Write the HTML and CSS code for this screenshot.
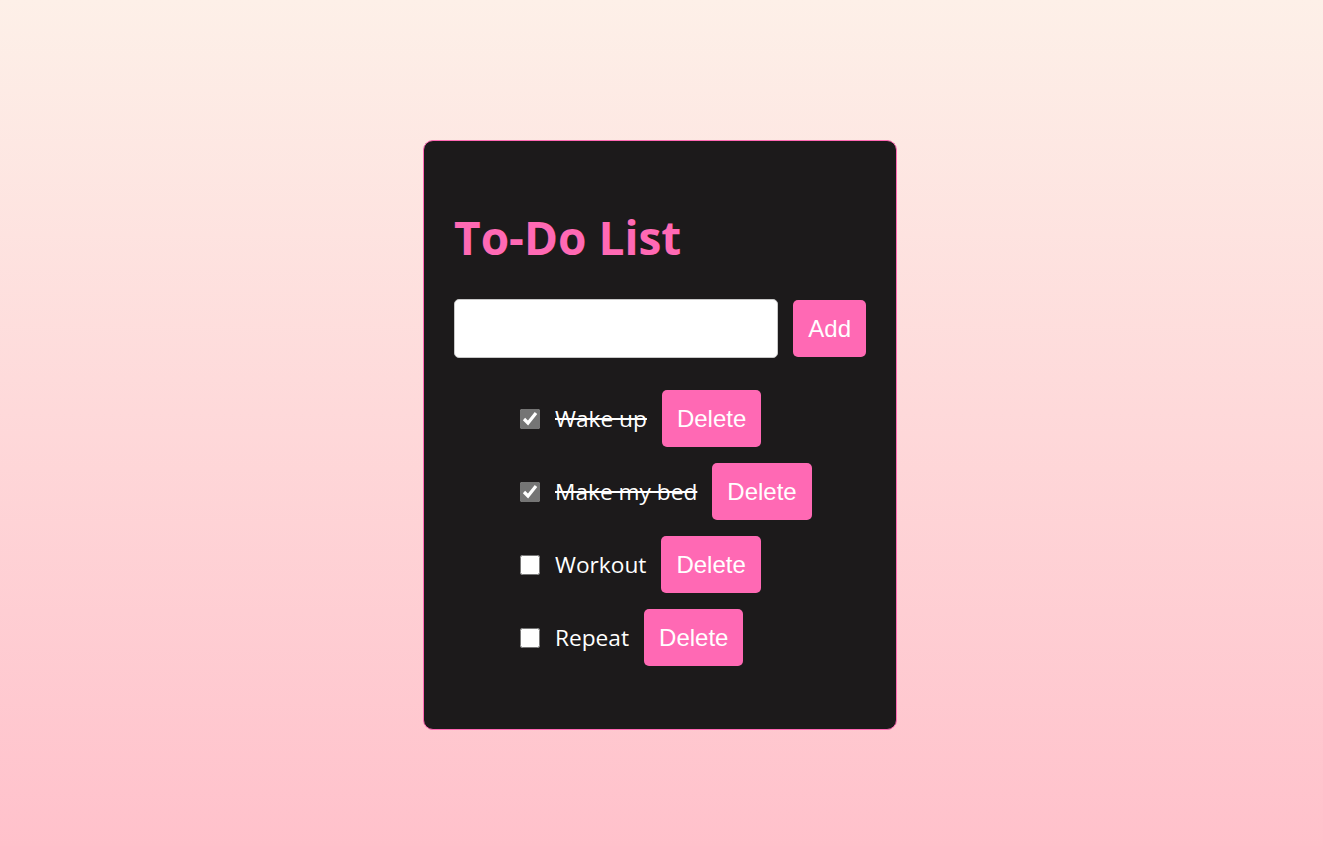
FILE: index.html
```html
<!DOCTYPE html>
<html lang="en">
<head>
<meta charset="utf-8">
<title>To-Do List</title>
<link rel="stylesheet" href="styles.css">
</head>
<body>
<main class="page">
  <section class="card">
    <h1 class="title">To-Do List</h1>
    <form class="add-form">
      <input class="task-input" type="text" aria-label="New task">
      <button class="btn" type="button">Add</button>
    </form>
    <ul class="tasks">
      <li class="task done"><input class="check" type="checkbox" checked><span class="label">Wake up</span><button class="btn" type="button">Delete</button></li>
      <li class="task done"><input class="check" type="checkbox" checked><span class="label">Make my bed</span><button class="btn" type="button">Delete</button></li>
      <li class="task"><input class="check" type="checkbox"><span class="label">Workout</span><button class="btn" type="button">Delete</button></li>
      <li class="task"><input class="check" type="checkbox"><span class="label">Repeat</span><button class="btn" type="button">Delete</button></li>
    </ul>
  </section>
</main>
</body>
</html>
```
FILE: styles.css
```css
html, body {
  margin: 0;
  height: 100%;
}
body {
  background: linear-gradient(to bottom, #fdf0e8 0%, #ffc1cb 100%);
  font-family: "Open Sans", "Noto Sans", sans-serif;
}
.page {
  display: flex;
  justify-content: center;
  padding-top: 140px;
  padding-right: 3px;
}
.card {
  width: 412px;
  padding: 30px 30px 63px 30px;
  background: #1c1a1b;
  border: 1px solid #ff69b4;
  border-radius: 10px;
}
.title {
  margin: 36px 0 0 0;
  color: #ff69b4;
  font-size: 46px;
  font-weight: 700;
  line-height: 60px;
}
.add-form {
  display: flex;
  align-items: center;
  gap: 15px;
  margin-top: 32px;
}
.task-input {
  flex: 1;
  height: 59px;
  box-sizing: border-box;
  border: 1px solid #c8c8c8;
  border-radius: 5px;
  background: #fff;
  margin: 0;
}
.btn {
  background: #ff69b4;
  color: #fff;
  border: none;
  border-radius: 5px;
  font-family: "Liberation Sans", Arial, sans-serif;
  font-size: 24px;
  padding: 15px;
  line-height: 27px;
  margin: 0;
}
.tasks {
  list-style: none;
  margin: 32px 0 0 0;
  padding: 0 0 0 66px;
  display: flex;
  flex-direction: column;
  gap: 16px;
}
.task {
  display: flex;
  align-items: center;
}
.check {
  width: 20px;
  height: 20px;
  margin: 0 15px 0 0;
  accent-color: #757575;
}
.label {
  color: #fff;
  font-size: 22.7px;
  margin-right: 15px;
}
.done .label {
  text-decoration: line-through;
}
```
